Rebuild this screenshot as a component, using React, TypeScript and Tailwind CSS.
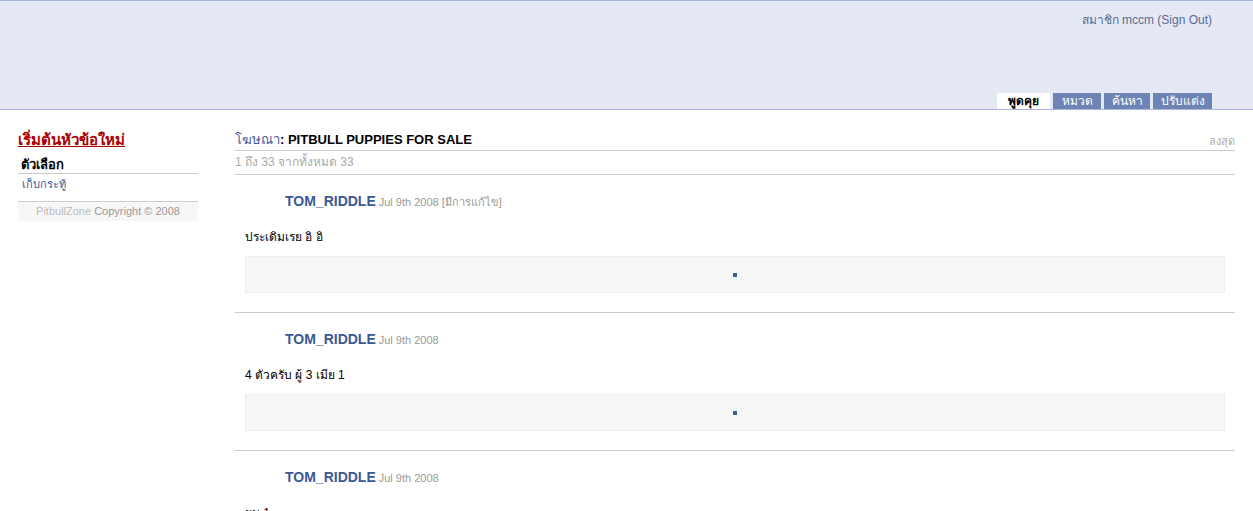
const posts = [
  { name: "TOM_RIDDLE", date: "Jul 9th 2008", edited: true, body: "ประเดิมเรย อิ อิ" },
  { name: "TOM_RIDDLE", date: "Jul 9th 2008", edited: false, body: "4 ตัวครับ ผู้ 3 เมีย 1" },
  { name: "TOM_RIDDLE", date: "Jul 9th 2008", edited: false, body: "ผม 1" },
];

const tabs = [
  { label: "หมวด", w: "w-[48px]" },
  { label: "ค้นหา", w: "w-[46px]" },
  { label: "ปรับแต่ง", w: "w-[59px]" },
];

function Post({ name, date, edited, body }: (typeof posts)[number]) {
  return (
    <div className="border-b border-[#cccccc] pb-[19px]">
      <div className="flex items-baseline gap-[3px] pl-[50px] pt-[18px] leading-[16px]">
        <span className="text-[14px] font-bold text-[#3b5998]">{name}</span>
        <span className="text-[11px] text-[#999999]">
          {date}
          {edited && " [มีการแก้ไข]"}
        </span>
      </div>
      <div className="mt-[20px] pl-[10px] text-[12px] leading-[14px] text-black">{body}</div>
      <div className="mx-[10px] mt-[12px] flex h-[37px] items-center justify-center border border-[#eeeeee] bg-[#f7f7f7]">
        <span className="block h-[4px] w-[4px] bg-[#3b5998]" />
      </div>
    </div>
  );
}

export default function App() {
  return (
    <div className="min-h-[511px] bg-white font-['Liberation_Sans',Tahoma,sans-serif]">
      <header className="flex h-[110px] flex-col justify-between border-y border-[#a9b7dc] bg-[#e5e9f5] pr-[41px]">
        <div className="pt-[12px] text-right text-[12px] leading-[14px] text-[#5a6a94]">
          สมาชิก mccm <span>(Sign Out)</span>
        </div>
        <nav className="flex justify-end gap-[3px]">
          <span className="flex h-[16px] w-[53px] items-center justify-center bg-white text-[12px] font-bold leading-[14px] text-black">
            พูดคุย
          </span>
          {tabs.map((tab) => (
            <span
              key={tab.label}
              className={`flex h-[16px] ${tab.w} items-center justify-center bg-[#6d84b4] text-[12px] leading-[14px] text-white`}
            >
              {tab.label}
            </span>
          ))}
        </nav>
      </header>

      <div className="flex gap-[37px] px-[18px] pt-[22px]">
        <aside className="w-[180px] shrink-0">
          <a className="block text-[15px] font-bold leading-[16px] text-[#aa0000] underline">เริ่มต้นหัวข้อใหม่</a>
          <div className="mt-[9px] border-b border-[#cccccc] pb-[1px] pl-[3px] text-[13px] font-bold leading-[15px] text-black">
            ตัวเลือก
          </div>
          <div className="pb-[10px] pl-[4px] pt-[3px] text-[11px] leading-[14px] text-[#3b5998]">เก็บกระทู้</div>
          <div className="border-t border-[#cccccc] bg-[#f7f7f7] py-[3px] text-center text-[11px] leading-[13px] text-[#999999]">
            <span className="text-[#bbbbbb]">PitbullZone</span> Copyright © 2008
          </div>
        </aside>

        <main className="min-w-0 flex-1">
          <div className="flex items-end justify-between border-b border-[#cccccc] pb-[2px]">
            <h1 className="text-[13px] font-bold leading-[16px] text-black">
              <span className="font-normal text-[#3b5998]">โฆษณา</span>: PITBULL PUPPIES FOR SALE
            </h1>
            <span className="text-[11px] leading-[14px] text-[#aaaaaa]">ลงสุด</span>
          </div>
          <div className="border-b border-[#cccccc] pb-[5px] pt-[4px] text-[12px] leading-[14px] text-[#aaaaaa]">
            1 ถึง 33 จากทั้งหมด 33
          </div>
          {posts.map((post, i) => (
            <Post key={i} {...post} />
          ))}
        </main>
      </div>
    </div>
  );
}
